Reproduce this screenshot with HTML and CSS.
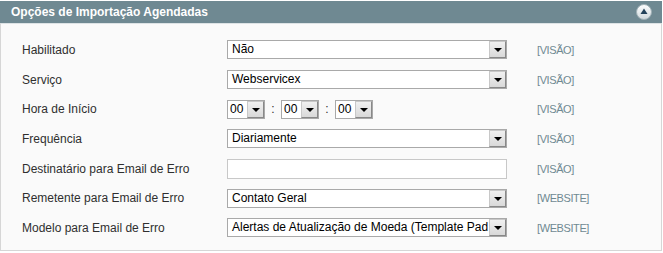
FILE: index.html
```html
<!DOCTYPE html>
<html lang="pt-BR">
<head>
    <meta charset="UTF-8">
    <title>Opções de Importação Agendadas</title>
    <link rel="stylesheet" href="styles.css">
</head>
<body>
    <div class="entry-edit">
        <div class="section-head">
            <span>Opções de Importação Agendadas</span>
            <span class="collapse-btn">
                <svg width="16" height="16" viewBox="0 0 16 16">
                    <defs>
                        <linearGradient id="g" x1="0" y1="0" x2="0" y2="1">
                            <stop offset="0" stop-color="#ffffff"/>
                            <stop offset="1" stop-color="#cfd8dc"/>
                        </linearGradient>
                    </defs>
                    <circle cx="8" cy="8" r="7.5" fill="url(#g)" stroke="#9fb0b6"/>
                    <path d="M8 4.5 L11.5 10 L4.5 10 Z" fill="#23425a"/>
                </svg>
            </span>
        </div>

        <div class="fieldset">
            <div class="form-list">
                <div class="row">
                    <label class="label">Habilitado</label>
                    <div class="value"><span class="select"><span class="sel-text">Não</span><span class="arrow"></span></span></div>
                    <span class="scope">[VISÃO]</span>
                </div>
                <div class="row">
                    <label class="label">Serviço</label>
                    <div class="value"><span class="select"><span class="sel-text">Webservicex</span><span class="arrow"></span></span></div>
                    <span class="scope">[VISÃO]</span>
                </div>
                <div class="row">
                    <label class="label">Hora de Início</label>
                    <div class="value time">
                        <span class="select small"><span class="sel-text">00</span><span class="arrow"></span></span>
                        <span class="colon">:</span>
                        <span class="select small"><span class="sel-text">00</span><span class="arrow"></span></span>
                        <span class="colon">:</span>
                        <span class="select small"><span class="sel-text">00</span><span class="arrow"></span></span>
                    </div>
                    <span class="scope">[VISÃO]</span>
                </div>
                <div class="row">
                    <label class="label">Frequência</label>
                    <div class="value"><span class="select"><span class="sel-text">Diariamente</span><span class="arrow"></span></span></div>
                    <span class="scope">[VISÃO]</span>
                </div>
                <div class="row">
                    <label class="label">Destinatário para Email de Erro</label>
                    <div class="value"><input type="text" class="input-text"></div>
                    <span class="scope">[VISÃO]</span>
                </div>
                <div class="row">
                    <label class="label">Remetente para Email de Erro</label>
                    <div class="value"><span class="select"><span class="sel-text">Contato Geral</span><span class="arrow"></span></span></div>
                    <span class="scope">[WEBSITE]</span>
                </div>
                <div class="row">
                    <label class="label">Modelo para Email de Erro</label>
                    <div class="value"><span class="select"><span class="sel-text">Alertas de Atualização de Moeda (Template Pad</span><span class="arrow"></span></span></div>
                    <span class="scope">[WEBSITE]</span>
                </div>
            </div>
        </div>
    </div>
</body>
</html>
```

FILE: styles.css
```css
body {
    margin: 0;
    padding: 0;
    font-family: "Liberation Sans", Arial, sans-serif;
    font-size: 12px;
    background-color: #ffffff;
    width: 663px;
}

.entry-edit {
    width: 662px;
}

.section-head {
    background-color: #6f8992;
    color: #fff;
    font-weight: bold;
    font-size: 12px;
    height: 22px;
    margin-top: 1px;
    padding: 0 11px 0 11px;
    display: flex;
    align-items: center;
    justify-content: space-between;
}

.collapse-btn {
    display: flex;
    margin-right: -1px;
}

.fieldset {
    background-color: #fafafa;
    border: 1px solid #d6d6d6;
    border-top: 1px solid #dde3e5;
    padding: 11px 0 7px 21px;
}

.form-list {
    display: grid;
    grid-template-columns: 205px 280px auto;
    grid-auto-rows: 29.7px;
    column-gap: 0;
}

.row {
    display: contents;
}

.label {
    color: #2f2f2f;
    align-self: center;
}

.value {
    align-self: center;
    display: flex;
    align-items: center;
}

.scope {
    align-self: center;
    padding-left: 30px;
    color: #6f8992;
    font-size: 11px;
    letter-spacing: -0.4px;
}

.select {
    position: relative;
    display: block;
    width: 280px;
    height: 19px;
    box-sizing: border-box;
    border: 1px solid #a9a9a9;
    background-color: #fff;
    color: #000;
    overflow: hidden;
}

.sel-text {
    display: block;
    line-height: 17px;
    padding-left: 4px;
    white-space: nowrap;
}

.arrow {
    position: absolute;
    top: 0;
    right: 0;
    width: 17px;
    height: 17px;
    box-sizing: border-box;
    border: 1px solid #888;
    border-top-color: #c8c8c8;
    border-left-color: #c8c8c8;
    background: linear-gradient(#f0f0f0, #d9d9d9);
}

.arrow::after {
    content: "";
    position: absolute;
    left: 4px;
    top: 6px;
    border-left: 4px solid transparent;
    border-right: 4px solid transparent;
    border-top: 4px solid #000;
}

.select.small {
    width: 38px;
}

.select.small .sel-text {
    padding-left: 2px;
}

.colon {
    color: #2f2f2f;
    width: 16px;
    text-align: center;
}

.input-text {
    width: 280px;
    height: 20px;
    box-sizing: border-box;
    border: 1px solid #c8c8c8;
    background-color: #fff;
    margin: 0;
    padding: 0 4px;
}
```
